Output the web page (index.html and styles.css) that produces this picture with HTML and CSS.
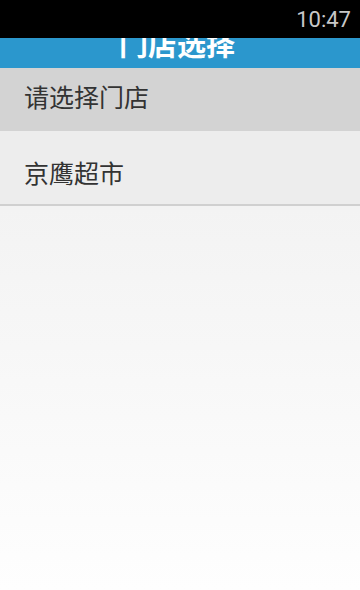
FILE: index.html
```html
<!DOCTYPE html>
<html lang="zh-CN">
<head>
    <meta charset="UTF-8">
    <meta name="viewport" content="width=device-width, initial-scale=1.0">
    <title>门店选择</title>
    <link rel="stylesheet" href="styles.css">
</head>
<body>
    <div class="status-bar">
        <span class="clock">10:47</span>
    </div>

    <div class="title-bar">
        <h1>门店选择</h1>
    </div>

    <ul class="store-list">
        <li class="store-item placeholder">请选择门店</li>
        <li class="store-item">京鹰超市</li>
    </ul>
</body>
</html>
```

FILE: styles.css
```css
* {
    margin: 0;
    padding: 0;
    box-sizing: border-box;
}

html, body {
    height: 100%;
}

body {
    font-family: Roboto, 'Noto Sans CJK SC', sans-serif;
    background: linear-gradient(to bottom, #ededed, #fefefe);
    color: #333;
}

.status-bar {
    height: 38px;
    background: #000;
    display: flex;
    justify-content: flex-end;
    align-items: center;
    padding-right: 9px;
}

.clock {
    color: #c8c8c8;
    font-size: 22px;
    font-family: Roboto, sans-serif;
}

.title-bar {
    height: 30px;
    background: #2b97cd;
    overflow: hidden;
    text-align: center;
}

.title-bar h1 {
    color: #fff;
    font-size: 29px;
    font-weight: bold;
    line-height: 30px;
    margin-top: -7px;
    margin-left: -6px;
}

.store-list {
    list-style: none;
}

.store-item {
    font-size: 25px;
    padding-left: 24px;
    display: flex;
    align-items: center;
}

.store-item.placeholder {
    height: 63px;
    background: #d3d3d3;
    padding-bottom: 8px;
}

.store-item:last-child {
    height: 75px;
    background: #ededed;
    padding-top: 8px;
    border-bottom: 2px solid #d0d0d0;
}
```
